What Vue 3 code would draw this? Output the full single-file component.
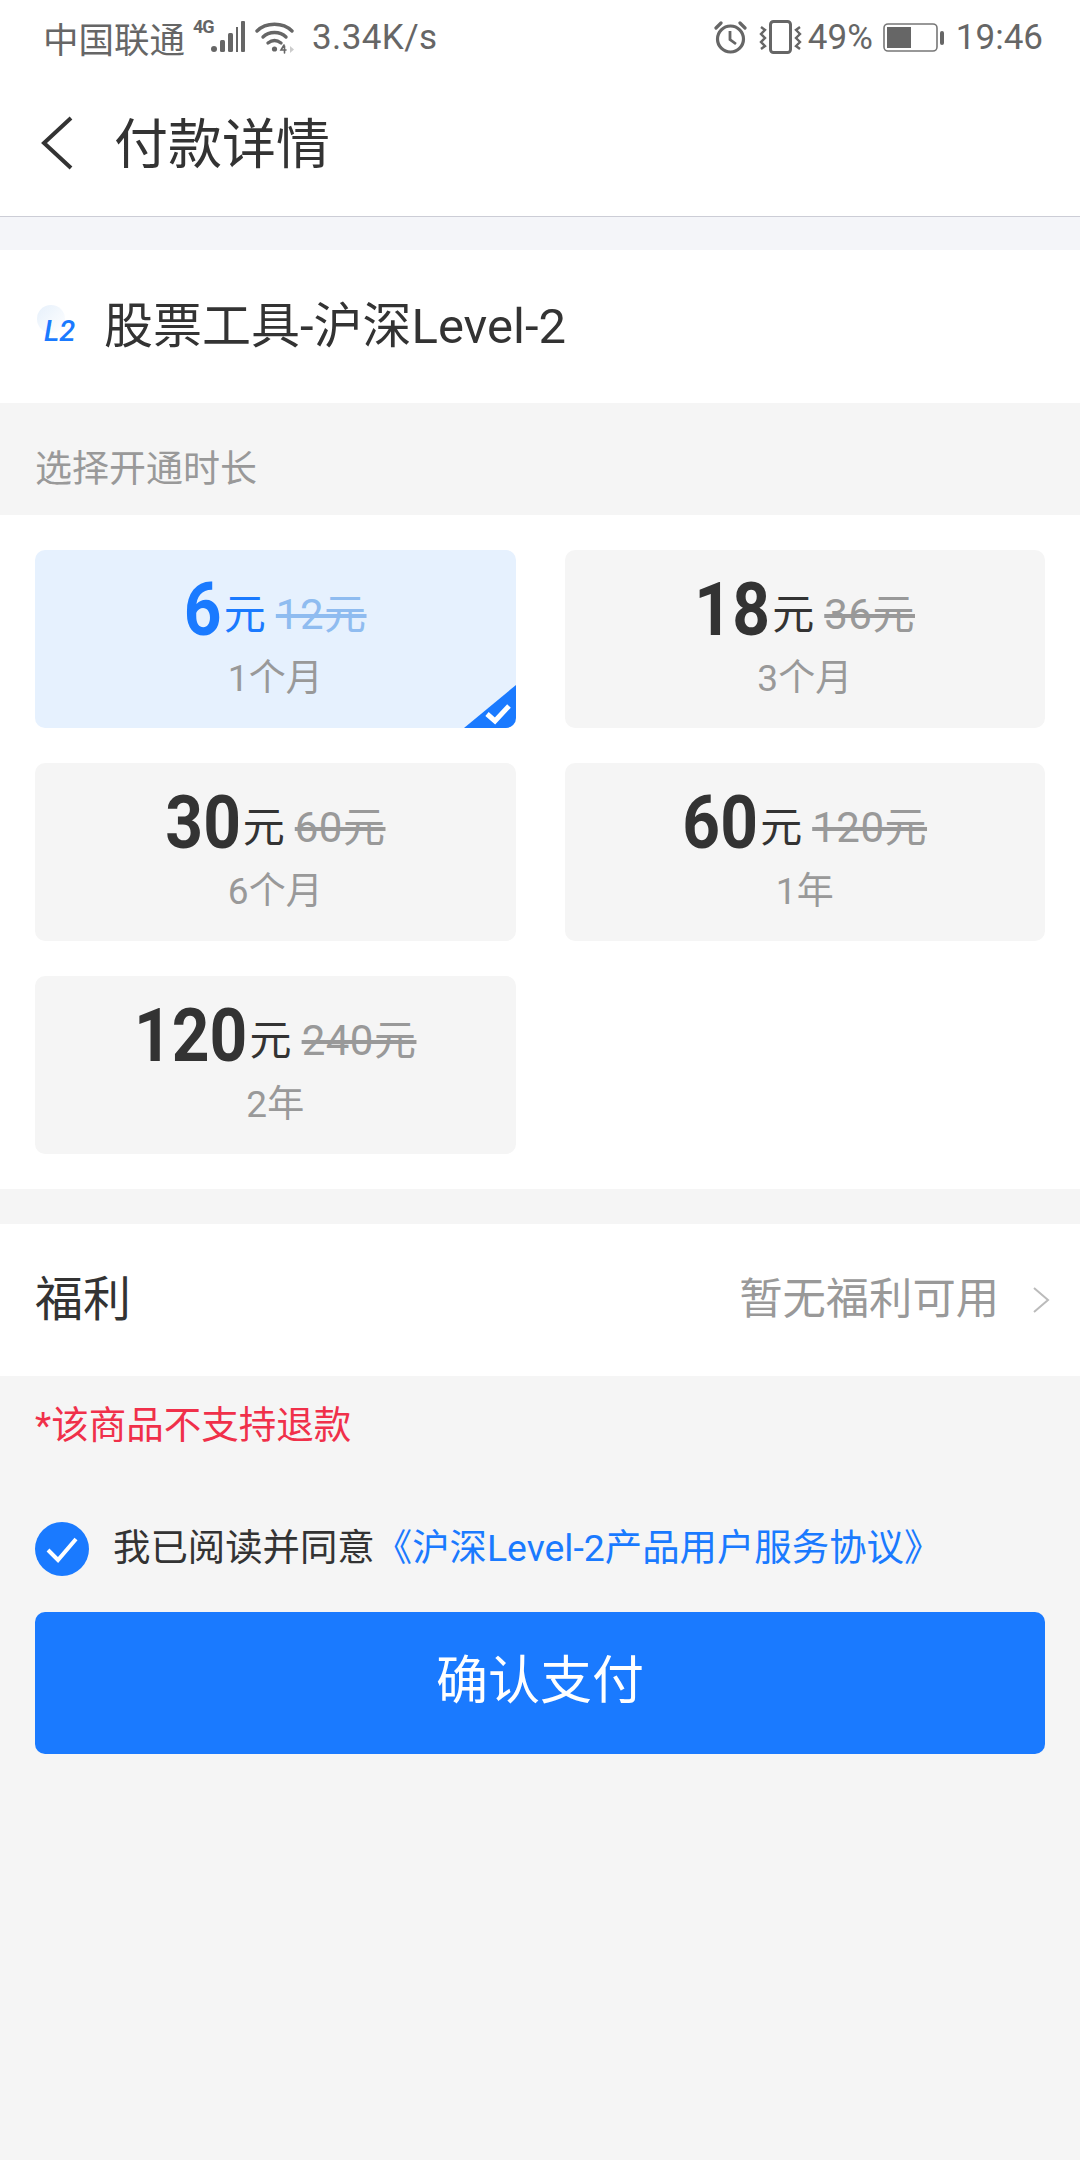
<template>
  <div class="page">
    <!-- status bar -->
    <div class="status">
      <div class="status-left">
        <span class="carrier">中国联通</span>
        <span class="net">4G</span>
        <svg class="signal" width="35" height="34" viewBox="0 0 35 34">
          <circle cx="3" cy="29" r="3" fill="#666" />
          <rect x="9" y="20" width="5" height="12" rx="1.5" fill="#666" />
          <rect x="17" y="13" width="5" height="19" rx="1.5" fill="#666" />
          <rect x="25" y="7" width="2" height="25" fill="#666" />
          <rect x="30" y="1" width="4" height="31" rx="1" fill="#666" />
        </svg>
        <svg class="wifi" width="40" height="34" viewBox="0 0 40 34" fill="none" stroke="#666" stroke-width="3.4" stroke-linecap="round">
          <path d="M2 11C11 2 28 2 37 11" />
          <path d="M8 17C14 11 25 11 31 17" />
          <path d="M13 23C17 20 22 20 26 23" />
          <circle cx="19.5" cy="29" r="2.6" fill="#666" stroke="none" />
          <path d="M29 25L26 30H31M29.5 26V33" stroke-width="1.6" />
          <path d="M35 26V33L39 29.5Z" fill="#ccc" stroke="none" />
        </svg>
        <span class="speed">3.34K/s</span>
      </div>
      <div class="status-right">
        <svg class="alarm" width="33" height="34" viewBox="0 0 33 34" fill="none" stroke="#666" stroke-width="3.2">
          <circle cx="16.5" cy="19" r="13" />
          <path d="M16 11V19.5L22 24" stroke-width="2.8" />
          <path d="M2 8L7 3M31 8L26 3" stroke-linecap="round" />
        </svg>
        <svg class="vibrate" width="43" height="34" viewBox="0 0 43 34" fill="none" stroke="#666">
          <rect x="11.5" y="1.5" width="20" height="31" rx="3" stroke-width="3" />
          <path d="M2 7L6 10L2 14L6 18L2 22L6 26L2 29" stroke-width="2.4" />
          <path d="M41 7L37 10L41 14L37 18L41 22L37 26L41 29" stroke-width="2.4" />
        </svg>
        <span class="percent">49%</span>
        <svg class="battery" width="62" height="30" viewBox="0 0 62 30">
          <rect x="1" y="2" width="53" height="27" rx="4" fill="none" stroke="#777" stroke-width="1.6" />
          <rect x="4" y="5" width="24" height="21" fill="#666" />
          <rect x="57" y="9" width="4" height="14" rx="2" fill="#666" />
        </svg>
        <span class="time">19:46</span>
      </div>
    </div>

    <!-- nav -->
    <div class="nav">
      <svg class="back" width="32" height="54" viewBox="0 0 32 54" fill="none" stroke="#333" stroke-width="4">
        <path d="M30 2L3 27L30 52" />
      </svg>
      <span class="title">付款详情</span>
    </div>

    <div class="band"></div>

    <!-- product -->
    <div class="product">
      <div class="l2-icon">
        <span class="l2-bubble"></span>
        <span class="l2-text">L2</span>
      </div>
      <span class="product-name">股票工具-沪深Level-2</span>
    </div>

    <div class="section-head">选择开通时长</div>

    <!-- duration options -->
    <div class="options">
      <div v-for="opt in options" :key="opt.label" class="card" :class="{ selected: opt.selected }">
        <div class="price-row">
          <span class="price" :style="{ marginLeft: -opt.price.length * 4.6 + 'px' }">{{ opt.price }}</span>
          <span class="unit">元</span>
          <span class="orig">{{ opt.orig }}元</span>
        </div>
        <div class="period">{{ opt.label }}</div>
        <svg v-if="opt.selected" class="corner" width="52" height="43" viewBox="0 0 52 43">
          <path d="M52 0V37Q52 43 46 43H0Z" fill="#1a7aff" />
          <path d="M23 29L31 36L45 21" fill="none" stroke="#fff" stroke-width="5" />
        </svg>
      </div>
    </div>

    <!-- welfare -->
    <div class="welfare">
      <span class="welfare-label">福利</span>
      <div class="welfare-right">
        <span class="welfare-value">暂无福利可用</span>
        <svg width="18" height="28" viewBox="0 0 18 28" fill="none" stroke="#bbb" stroke-width="2">
          <path d="M2 2L16 14L2 26" />
        </svg>
      </div>
    </div>

    <div class="notice">*该商品不支持退款</div>

    <div class="agree">
      <svg class="check" width="54" height="54" viewBox="0 0 54 54">
        <circle cx="27" cy="27" r="27" fill="#1a7aff" />
        <path d="M13 28L23 38L41 17" fill="none" stroke="#fff" stroke-width="4" />
      </svg>
      <span class="agree-text">我已阅读并同意</span>
      <span class="agree-link">《沪深Level-2产品用户服务协议》</span>
    </div>

    <div class="pay">确认支付</div>
  </div>
</template>

<script setup>
const options = [
  { price: '6', orig: '12', label: '1个月', selected: true },
  { price: '18', orig: '36', label: '3个月' },
  { price: '30', orig: '60', label: '6个月' },
  { price: '60', orig: '120', label: '1年' },
  { price: '120', orig: '240', label: '2年' },
]
</script>

<style>
html,
body {
  background: #f5f5f5;
}
</style>

<style scoped>
.page {
  width: 1080px;
  min-height: 2160px;
  background: #f5f5f5;
  font-family: Roboto, "Noto Sans CJK SC", sans-serif;
  color: #333;
}

/* status bar */
.status {
  height: 72px;
  background: #fff;
  display: flex;
  justify-content: space-between;
  align-items: center;
  padding: 2px 37px 0 43px;
  box-sizing: border-box;
  color: #666;
  font-size: 35px;
}
.status-left,
.status-right {
  display: flex;
  align-items: center;
}
.carrier {
  font-size: 35.5px;
}
.net {
  font-size: 18px;
  font-weight: 700;
  width: 18px;
  margin: -22px 0 0 8px;
  letter-spacing: -1px;
}
.wifi {
  margin-left: 9px;
}
.speed {
  margin-left: 17px;
  letter-spacing: 0.4px;
}
.vibrate {
  margin-left: 12px;
}
.percent {
  margin-left: 6px;
}
.battery {
  margin-left: 10px;
}
.time {
  margin-left: 11px;
  font-size: 35px;
}

/* nav */
.nav {
  height: 145px;
  background: #fff;
  display: flex;
  align-items: center;
  padding: 0 0 0 41px;
  box-sizing: border-box;
  border-bottom: 1px solid #cccdd6;
}
.back {
  margin-bottom: 2px;
}
.title {
  font-size: 54px;
  margin-left: 41px;
  line-height: 1;
  padding-top: 3px;
}
.band {
  height: 33px;
  background: #f4f5f9;
}

/* product */
.product {
  height: 153px;
  background: #fff;
  display: flex;
  align-items: center;
  padding-left: 35px;
}
.l2-icon {
  position: relative;
  width: 69px;
  height: 60px;
}
.l2-bubble {
  position: absolute;
  left: 2px;
  top: 8px;
  width: 28px;
  height: 28px;
  border-radius: 50%;
  background: linear-gradient(135deg, #e6f0fb, #fff);
}
.l2-text {
  position: absolute;
  left: 9px;
  top: 16px;
  font-size: 29px;
  line-height: 36px;
  font-style: italic;
  font-weight: 500;
  color: #1a7aff;
}
.product-name {
  font-size: 49px;
  line-height: 1;
}

.section-head {
  height: 112px;
  line-height: 134px;
  padding-left: 35px;
  font-size: 37px;
  color: #999;
}

/* duration cards */
.options {
  background: #fff;
  padding: 35px;
  display: grid;
  grid-template-columns: 1fr 1fr;
  column-gap: 49px;
  row-gap: 35px;
}
.card {
  position: relative;
  height: 178px;
  border-radius: 10px;
  background: #f5f5f5;
  overflow: hidden;
  display: flex;
  flex-direction: column;
  align-items: center;
}
.card.selected {
  background: #e6f1fe;
}
.price-row {
  height: 84px;
  margin-top: 18px;
  line-height: 84px;
  white-space: nowrap;
}
.price {
  display: inline-block;
  font-size: 74px;
  font-weight: 700;
  color: #333;
  transform: scaleX(0.89);
  transform-origin: right center;
}
.unit {
  font-size: 42px;
  margin-left: 2px;
  color: #333;
  vertical-align: 6px;
}
.orig {
  font-size: 42px;
  margin-left: 10px;
  color: #999;
  letter-spacing: 0.5px;
  vertical-align: 6px;
  text-decoration: line-through;
  text-decoration-thickness: 4px;
}
.period {
  font-size: 37px;
  line-height: 44px;
  margin-top: 5px;
  color: #999;
}
.selected .price,
.selected .unit {
  color: #1a7aff;
}
.selected .orig {
  color: #8fbcf0;
}
.corner {
  position: absolute;
  right: 0;
  bottom: 0;
}

/* welfare row */
.welfare {
  margin-top: 35px;
  height: 152px;
  background: #fff;
  display: flex;
  justify-content: space-between;
  align-items: center;
  padding: 0 30px 0 35px;
}
.welfare-label {
  font-size: 48px;
  line-height: 1;
}
.welfare-right {
  display: flex;
  align-items: center;
  gap: 33px;
}
.welfare-value {
  font-size: 43.3px;
  line-height: 1;
  color: #999;
}

.notice {
  padding-left: 35px;
  margin-top: 24px;
  font-size: 37.5px;
  line-height: 50px;
  color: #f0304a;
}

.agree {
  margin-top: 72px;
  padding-left: 35px;
  display: flex;
  align-items: center;
  height: 54px;
}
.agree-text {
  margin-left: 24px;
  font-size: 37.4px;
  line-height: 1;
}
.agree-link {
  font-size: 37.4px;
  line-height: 1;
  color: #1a7aff;
}

.pay {
  margin: 36px 35px 0;
  height: 142px;
  line-height: 140px;
  text-align: center;
  background: #1a7aff;
  border-radius: 10px;
  color: #fff;
  font-size: 52px;
}
</style>
